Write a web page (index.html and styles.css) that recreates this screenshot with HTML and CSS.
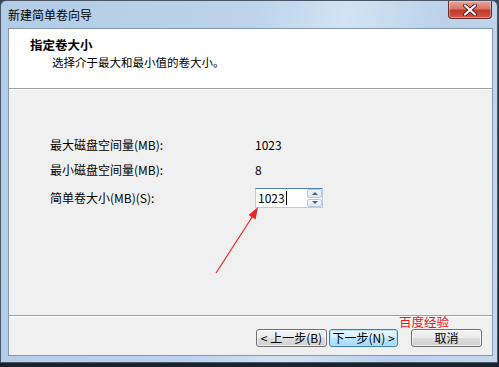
FILE: index.html
```html
<!DOCTYPE html>
<html lang="zh-CN">
<head>
<meta charset="utf-8">
<title>新建简单卷向导</title>
<link rel="stylesheet" href="styles.css">
</head>
<body>
<div class="screen">
  <div class="window">
    <div class="titlebar">
      <span class="title-text">新建简单卷向导</span>
      <div class="close-btn">
        <svg width="16" height="12" viewBox="0 0 16 12">
          <path d="M3 1.5 L13 10.5 M13 1.5 L3 10.5" stroke="#5a1c1c" stroke-width="4" stroke-linecap="round"/>
          <path d="M3 1.5 L13 10.5 M13 1.5 L3 10.5" stroke="#ffffff" stroke-width="2.2" stroke-linecap="round"/>
        </svg>
      </div>
    </div>
    <div class="client">
      <div class="header">
        <div class="header-title">指定卷大小</div>
        <div class="header-sub">选择介于最大和最小值的卷大小。</div>
      </div>
      <div class="body">
        <div class="rows">
          <div class="row">
            <span class="label">最大磁盘空间量(MB):</span>
            <span class="value">1023</span>
          </div>
          <div class="row">
            <span class="label">最小磁盘空间量(MB):</span>
            <span class="value">8</span>
          </div>
          <div class="row row-input">
            <span class="label">简单卷大小(MB)(S):</span>
            <div class="spin">
              <div class="spin-text">1023<span class="caret"></span></div>
              <div class="spin-btns">
                <div class="spin-btn"><span class="tri-up"></span></div>
                <div class="spin-btn"><span class="tri-down"></span></div>
              </div>
            </div>
          </div>
        </div>
        <svg class="arrow" width="482" height="226" viewBox="0 0 482 226">
          <line x1="207" y1="183" x2="243.5" y2="126.5" stroke="#e8262b" stroke-width="1.2"/>
          <polygon points="249,117 246.6,129.6 239.6,125.1" fill="#e8262b"/>
        </svg>
      </div>
      <div class="footer">
        <span class="watermark">百度经验</span>
        <div class="btn btn-back">&lt; 上一步(B)</div>
        <div class="btn btn-next btn-default">下一步(N) &gt;</div>
        <div class="btn btn-cancel">取消</div>
      </div>
    </div>
  </div>
</div>
</body>
</html>
```
FILE: styles.css
```css
* { box-sizing: border-box; }
html, body { margin: 0; padding: 0; }
body {
  font-family: "Noto Sans CJK SC", "DejaVu Sans", sans-serif;
  font-size: 12px;
  color: #000;
  background: #1e2630;
}
.screen {
  width: 499px;
  height: 367px;
  background: linear-gradient(#3a4452, #1c232c);
  overflow: hidden;
}
.window {
  width: 498px;
  height: 363px;
  border: 1px solid #4a5566;
  border-radius: 6px 6px 0 0;
  padding: 0 4px 6px 7px;
  background: linear-gradient(100deg, #b3cce7 0%, #bcd3eb 45%, #d3e3f3 62%, #bad1ea 80%, #c3d8ee 100%);
  display: flex;
  flex-direction: column;
}
.titlebar {
  height: 27px;
  display: flex;
  align-items: center;
  flex-shrink: 0;
}
.title-text {
  font-size: 12px;
  line-height: 16px;
  padding-top: 1px;
  color: #000;
}
.close-btn {
  margin-left: auto;
  margin-right: 1px;
  align-self: flex-start;
  width: 44px;
  height: 18px;
  border: 1px solid #6b2a2a;
  border-top: none;
  border-radius: 0 0 4px 4px;
  background: linear-gradient(#e8a496 0%, #d7786a 45%, #c0392b 55%, #d2574a 100%);
  display: flex;
  align-items: center;
  justify-content: center;
  box-shadow: inset 0 0 0 1px rgba(255,255,255,0.35);
}
.client {
  flex: 1;
  border: 1px solid #8598ae;
  background: #f0f0f0;
  display: flex;
  flex-direction: column;
  position: relative;
}
.header {
  height: 60px;
  background: #fff;
  border-bottom: 1px solid #a0a0a0;
  box-shadow: 0 1px 0 #ffffff;
  padding: 8px 0 0 21px;
  flex-shrink: 0;
}
.header-title {
  font-weight: bold;
  font-size: 12.5px;
  line-height: 16px;
}
.header-sub {
  font-size: 11.5px;
  line-height: 16px;
  margin-top: 1px;
  padding-left: 22px;
}
.body {
  flex: 1;
  position: relative;
  padding: 45px 0 0 41px;
  margin-top: 1px;
}
.rows {
  display: flex;
  flex-direction: column;
  gap: 5px;
}
.row {
  display: flex;
  align-items: center;
  height: 20px;
}
.row-input { margin-top: 3px; }
.label {
  width: 205px;
  font-size: 12px;
  line-height: 16px;
}
.value {
  font-size: 12px;
  line-height: 16px;
}
.spin {
  width: 68px;
  height: 20px;
  display: flex;
  background: #fff;
  border: 1px solid #b5cde6;
  border-top-color: #4f83bd;
}
.spin-text {
  flex: 1;
  font-size: 12px;
  line-height: 18px;
  padding-left: 2px;
  display: flex;
  align-items: center;
}
.caret {
  display: inline-block;
  width: 1px;
  height: 14px;
  background: #000;
  margin-left: 1px;
}
.spin-btns {
  width: 15px;
  display: flex;
  flex-direction: column;
  gap: 1px;
}
.spin-btn {
  flex: 1;
  border: 1px solid #b9c6d6;
  border-radius: 2px;
  background: linear-gradient(#f4f7fb, #dfe6ef);
  display: flex;
  align-items: center;
  justify-content: center;
}
.tri-up, .tri-down {
  width: 0;
  height: 0;
  border-left: 3px solid transparent;
  border-right: 3px solid transparent;
}
.tri-up { border-bottom: 3px solid #4c607a; }
.tri-down { border-top: 3px solid #4c607a; }
.arrow {
  position: absolute;
  left: 0;
  top: 0;
  pointer-events: none;
}
.footer {
  height: 40px;
  flex-shrink: 0;
  border-top: 1px solid #a0a0a0;
  box-shadow: inset 0 1px 0 #ffffff;
  position: relative;
  display: flex;
  justify-content: flex-end;
  align-items: flex-start;
  padding: 13px 10px 0 0;
}
.watermark {
  position: absolute;
  left: 390px;
  top: 0;
  color: #e3191c;
  font-size: 12.5px;
  line-height: 12px;
}
.btn {
  height: 18px;
  width: 71px;
  border: 1px solid #707070;
  border-radius: 3px;
  background: linear-gradient(#f2f2f2 0%, #ebebeb 50%, #dddddd 51%, #cfcfcf 100%);
  box-shadow: inset 0 0 0 1px rgba(255,255,255,0.7);
  font-size: 12px;
  line-height: 16px;
  text-align: center;
  white-space: nowrap;
}
.btn-next {
  width: 69px;
  margin-left: 2px;
}
.btn-default {
  border-color: #3c7fb1;
  background: linear-gradient(#eaf6fd 0%, #d9f0fc 50%, #bee6fd 51%, #a7d9f5 100%);
  box-shadow: inset 0 0 0 1px #b6e3fb;
}
.btn-cancel { margin-left: 13px; }
```
